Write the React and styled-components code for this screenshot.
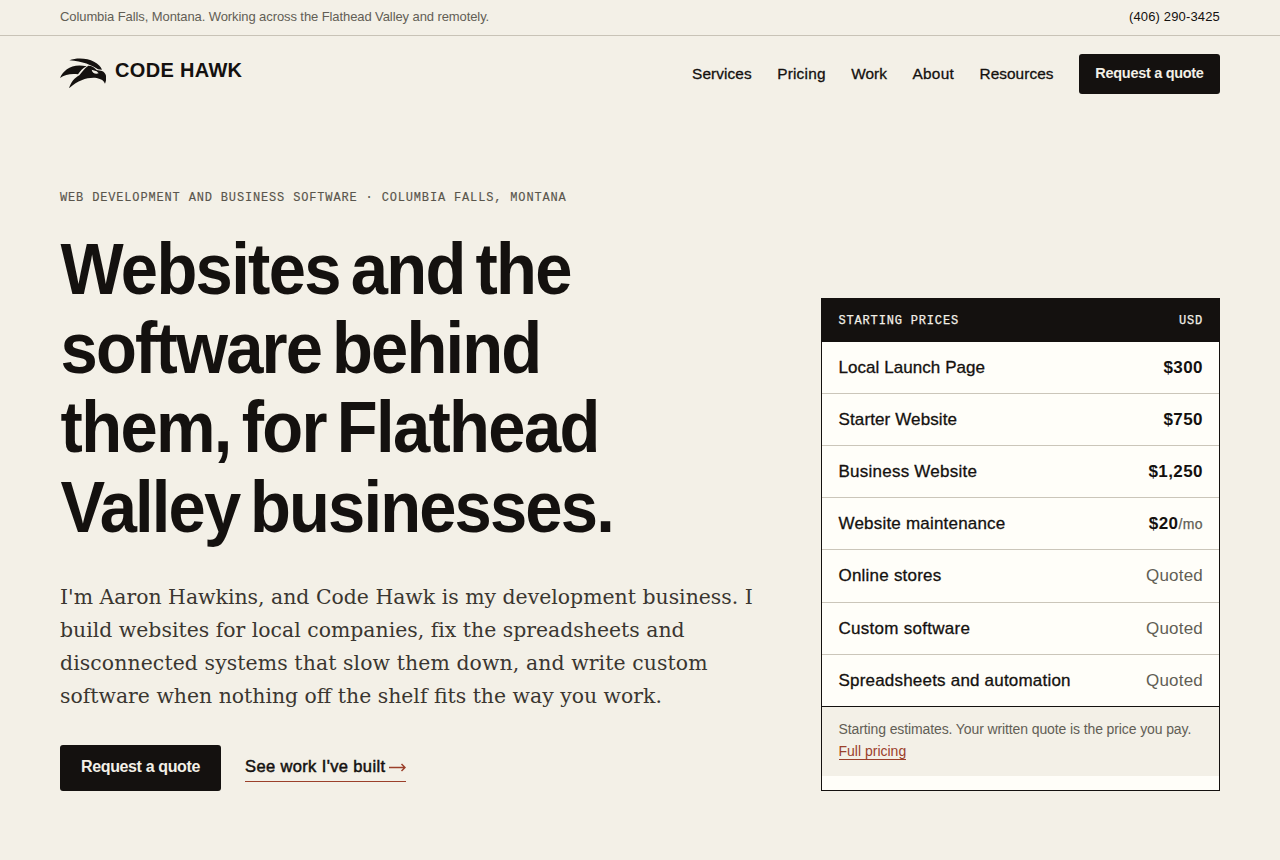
import React from "react";
import styled, { createGlobalStyle } from "styled-components";

const ink = "#14110f";
const paper = "#f3f0e7";
const muted = "#625e55";
const rust = "#9b402b";
const sans = `"Liberation Sans", Arial, sans-serif`;
const mono = `"Liberation Mono", monospace`;

const GlobalStyle = createGlobalStyle`
  * { box-sizing: border-box; }
  body { margin: 0; background: ${paper}; color: ${ink}; font-family: ${sans}; }
  a { color: inherit; text-decoration: none; }
`;

const Page = styled.div`
  height: 860px;
  overflow: hidden;
`;

const TopBar = styled.div`
  display: flex;
  justify-content: space-between;
  height: 36px;
  padding: 0 60px;
  border-bottom: 1px solid #c8c3b7;
  font-size: 13px;
  line-height: 34px;
`;

const Place = styled.span`
  color: ${muted};
  letter-spacing: -0.09px;
`;

const Phone = styled.a`
  letter-spacing: 0.15px;
`;

const Header = styled.header`
  display: flex;
  align-items: center;
  justify-content: space-between;
  height: 76px;
  padding: 0 60px;
`;

const Brand = styled.a`
  display: flex;
  align-items: center;
  gap: 9px;
  height: 31px;
  margin-bottom: 2px;
`;

const BrandMark = styled.svg`
  width: 46px;
  height: 30.67px;
  fill: ${ink};
`;

const BrandName = styled.span`
  padding-bottom: 7px;
  font-size: 21px;
  line-height: 24px;
  font-weight: 700;
  letter-spacing: 0.35px;
  transform: scaleX(0.952);
  transform-origin: left;
`;

const Nav = styled.nav`
  display: flex;
  align-items: center;
  gap: 25.5px;
`;

const NavLink = styled.a`
  font-size: 15.4px;
  line-height: 20px;
  letter-spacing: ${(p) => p.$tracking || 0}px;
  -webkit-text-stroke: 0.3px ${ink};
`;

const Button = styled.a`
  display: flex;
  justify-content: center;
  width: ${(p) => (p.$large ? 161 : 141)}px;
  height: ${(p) => (p.$large ? 46 : 40)}px;
  border-radius: 3px;
  background: ${ink};
  color: ${paper};
  font-size: ${(p) => (p.$large ? 16 : 14.5)}px;
  font-weight: 700;
  line-height: ${(p) => (p.$large ? 44 : 38)}px;
  letter-spacing: ${(p) => (p.$large ? -0.37 : -0.3)}px;
  white-space: nowrap;
`;

const Hero = styled.main`
  display: grid;
  grid-template-columns: 1fr 399px;
  align-items: end;
  padding: 78px 60px 0;
`;

const Eyebrow = styled.p`
  margin: 0 0 23.8px;
  color: #59554c;
  font-family: ${mono};
  font-size: 12px;
  line-height: 16px;
  letter-spacing: 0.84px;
  text-transform: uppercase;
  -webkit-text-stroke: 0.15px #59554c;
`;

const Title = styled.h1`
  margin: 0;
  padding-left: 0.6px;
  font-size: 72px;
  line-height: 79.3px;
  font-weight: 700;
  word-spacing: -6.5px;
  white-space: nowrap;
  transform: scaleX(0.93);
  transform-origin: left;
`;

const TitleLine = styled.span`
  display: block;
  letter-spacing: ${(p) => p.$tracking}px;
`;

const Intro = styled.p`
  margin: 34px 0 31.6px;
  color: #3a3630;
  font-family: "DejaVu Serif", serif;
  font-size: 20.4px;
  line-height: 33px;
  white-space: nowrap;
`;

const IntroLine = styled.span`
  display: block;
  letter-spacing: ${(p) => p.$tracking}px;
`;

const Actions = styled.div`
  display: flex;
  align-items: flex-start;
  gap: 24px;
`;

const WorkLink = styled.a`
  display: flex;
  align-items: center;
  justify-content: space-between;
  width: 161px;
  height: 32px;
  margin-top: 5px;
  padding-top: 2px;
  border-bottom: 1px solid ${rust};
  font-size: 16.5px;
  letter-spacing: 0.37px;
  white-space: nowrap;
  -webkit-text-stroke: 0.5px ${ink};
`;

const Arrow = styled.svg`
  width: 17px;
  height: 9px;
  margin-top: 2px;
  fill: none;
  stroke: ${rust};
  stroke-width: 1.5;
`;

const PriceCard = styled.section`
  height: 493px;
  border: 1px solid ${ink};
  background: #fffef9;
`;

const CardHead = styled.div`
  display: flex;
  justify-content: space-between;
  height: 43px;
  padding: 0 16px 0 16.5px;
  background: ${ink};
  color: ${paper};
  font-family: ${mono};
  font-size: 12px;
  line-height: 44px;
  letter-spacing: 0.83px;
  text-transform: uppercase;
  -webkit-text-stroke: 0.25px ${paper};
`;

const PriceRow = styled.div`
  display: flex;
  justify-content: space-between;
  height: 52.2px;
  padding: 0 16px 0 16.5px;
  border-bottom: 1px solid #cbc6ba;
  font-size: 17px;
  line-height: 51.4px;

  &:last-child { border-bottom-color: ${ink}; }
`;

const Service = styled.span`
  letter-spacing: ${(p) => p.$tracking}px;
  -webkit-text-stroke: 0.3px ${ink};
`;

const Price = styled.span`
  font-weight: 700;
  letter-spacing: 0.42px;
`;

const Period = styled.small`
  color: ${muted};
  font-size: 14px;
  font-weight: 400;
  -webkit-text-stroke: 0.25px ${muted};
`;

const Quoted = styled.span`
  color: ${muted};
  letter-spacing: 0.2px;
`;

const CardFoot = styled.p`
  height: 69px;
  margin: 0;
  padding: 11px 16.5px;
  background: ${paper};
  color: ${muted};
  font-size: 14px;
  line-height: 22px;
  letter-spacing: -0.11px;
  white-space: nowrap;
`;

const PricingLink = styled.a`
  display: table;
  margin-top: 3px;
  border-bottom: 1px solid ${rust};
  color: ${rust};
  line-height: 16px;
  letter-spacing: 0;
`;

const navLinks = [
  ["Services", 0.08],
  ["Pricing", 0.2],
  ["Work", 0.05],
  ["About", 0.25],
  ["Resources", 0.05],
];

const titleLines = [
  ["Websites and the", -1.82],
  ["software behind", -1.97],
  ["them, for Flathead", -1.8],
  ["Valley businesses.", -2],
];

const introLines = [
  ["I'm Aaron Hawkins, and Code Hawk is my development business. I", 0.01],
  ["build websites for local companies, fix the spreadsheets and", 0.01],
  ["disconnected systems that slow them down, and write custom", 0.1],
  ["software when nothing off the shelf fits the way you work.", 0],
];

const services = [
  { name: "Local Launch Page", tracking: 0.06, price: "$300" },
  { name: "Starter Website", tracking: 0.12, price: "$750" },
  { name: "Business Website", tracking: 0.24, price: "$1,250" },
  { name: "Website maintenance", tracking: 0.2, price: "$20", period: "/mo" },
  { name: "Online stores", tracking: 0.22 },
  { name: "Custom software", tracking: 0.28 },
  { name: "Spreadsheets and automation", tracking: 0.2 },
];

function HawkMark() {
  return (
    <BrandMark viewBox="12 12 138 92" aria-hidden="true">
      <path d="M40 19C62 10 94 12 114 23C127 30 135 38 138 47L126 46C108 34 80 22 40 19Z" />
      <path d="M12 72C22 48 48 27 92 37C80 42 74 50 66 61C46 58 26 62 12 72Z" />
      <path
        fillRule="evenodd"
        d="M97 35C108 35 116 41 122 48L138 51C151 56 154 72 147 89C144 80 136 75 122 72C96 69 68 78 39 103C44 86 56 71 70 64C78 54 86 42 97 35ZM107 47C109 57 117 61 128 58L122 52Z"
      />
    </BrandMark>
  );
}

export default function App() {
  return (
    <Page>
      <GlobalStyle />
      <TopBar>
        <Place>Columbia Falls, Montana. Working across the Flathead Valley and remotely.</Place>
        <Phone href="tel:+14062903425">(406) 290-3425</Phone>
      </TopBar>
      <Header>
        <Brand href="#">
          <HawkMark />
          <BrandName>CODE HAWK</BrandName>
        </Brand>
        <Nav>
          {navLinks.map(([label, tracking]) => (
            <NavLink key={label} href="#" $tracking={tracking}>{label}</NavLink>
          ))}
          <Button href="#">Request a quote</Button>
        </Nav>
      </Header>
      <Hero>
        <div>
          <Eyebrow>Web development and business software · Columbia Falls, Montana</Eyebrow>
          <Title>
            {titleLines.map(([text, tracking]) => (
              <TitleLine key={text} $tracking={tracking}>{text} </TitleLine>
            ))}
          </Title>
          <Intro>
            {introLines.map(([text, tracking]) => (
              <IntroLine key={text} $tracking={tracking}>{text} </IntroLine>
            ))}
          </Intro>
          <Actions>
            <Button href="#" $large>Request a quote</Button>
            <WorkLink href="#">
              See work I've built
              <Arrow viewBox="0 0 17 9" aria-hidden="true">
                <path d="M0 4.5H16M12.5 1L16 4.5L12.5 8" />
              </Arrow>
            </WorkLink>
          </Actions>
        </div>
        <PriceCard>
          <CardHead>
            <span>Starting prices</span>
            <span>USD</span>
          </CardHead>
          <div>
            {services.map((s) => (
              <PriceRow key={s.name}>
                <Service $tracking={s.tracking}>{s.name}</Service>
                {s.price ? (
                  <Price>{s.price}{s.period && <Period>{s.period}</Period>}</Price>
                ) : (
                  <Quoted>Quoted</Quoted>
                )}
              </PriceRow>
            ))}
          </div>
          <CardFoot>
            Starting estimates. Your written quote is the price you pay.
            <PricingLink href="#">Full pricing</PricingLink>
          </CardFoot>
        </PriceCard>
      </Hero>
    </Page>
  );
}
